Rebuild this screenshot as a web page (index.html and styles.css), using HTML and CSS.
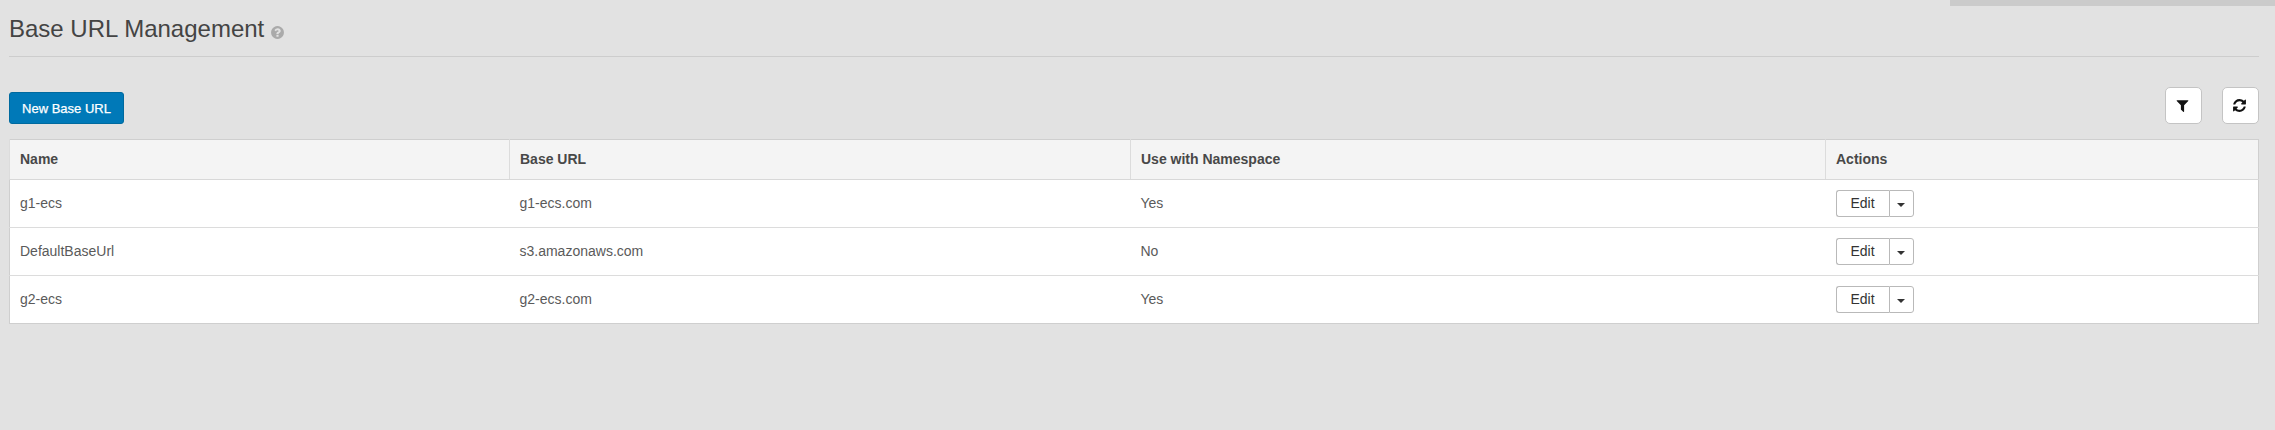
FILE: index.html
```html
<!DOCTYPE html>
<html lang="en">
<head>
<meta charset="utf-8">
<title>Base URL Management</title>
<link rel="stylesheet" href="styles.css">
</head>
<body>
<div class="top-strip"></div>
<main class="page">
  <header class="page-header">
    <h1 class="page-title">Base URL Management</h1>
    <svg class="help-icon" viewBox="0 0 1792 1792"><path d="M1024 1376v-192q0-14-9-23t-23-9h-192q-14 0-23 9t-9 23v192q0 14 9 23t23 9h192q14 0 23-9t9-23zm256-672q0-88-55.5-163t-138.5-116-170-41q-243 0-371 213-15 24 8 42l132 100q7 6 19 6 16 0 25-12 53-68 86-92 34-24 86-24 48 0 85.5 26t37.5 59q0 38-20 61t-68 45q-63 28-115.5 86.5t-52.5 125.5v36q0 14 9 23t23 9h192q14 0 23-9t9-23q0-19 21.5-49.5t54.5-49.5q32-18 49-28.5t46-35 44.5-48 28-60.5 12.5-81zm384 192q0 209-103 385.5t-279.5 279.5-385.5 103-385.5-103-279.5-279.5-103-385.5 103-385.5 279.5-279.5 385.5-103 385.5 103 279.5 279.5 103 385.5z"/></svg>
  </header>
  <div class="toolbar">
    <button class="btn-primary" type="button">New Base URL</button>
    <div class="tools">
      <button class="btn-icon" type="button" aria-label="Filter"><svg viewBox="0 0 1792 1792"><path d="M1595 295q17 41-14 70l-493 493v742q0 42-39 59-13 5-25 5-27 0-45-19l-256-256q-19-19-19-45v-486l-493-493q-31-29-14-70 17-39 59-39h1280q42 0 59 39z"/></svg></button>
      <button class="btn-icon" type="button" aria-label="Refresh"><svg viewBox="0 0 1792 1792"><path d="M1639 1056q0 5-1 7-64 268-268 434.5t-478 166.5q-146 0-282.5-55t-243.5-157l-129 129q-19 19-45 19t-45-19-19-45v-448q0-26 19-45t45-19h448q26 0 45 19t19 45-19 45l-137 137q71 66 161 102t187 36q134 0 250-65t186-179q11-17 53-117 8-23 30-23h192q13 0 22.5 9.5t9.5 22.5zm25-800v448q0 26-19 45t-45 19h-448q-26 0-45-19t-19-45 19-45l138-138q-148-137-349-137-134 0-250 65t-186 179q-11 17-53 117-8 23-30 23h-199q-13 0-22.5-9.5t-9.5-22.5v-7q65-268 270-434.5t480-166.5q146 0 284 55.5t245 156.5l130-129q19-19 45-19t45 19 19 45z"/></svg></button>
    </div>
  </div>
  <table class="grid">
    <colgroup><col class="col-name"><col class="col-url"><col class="col-ns"><col></colgroup>
    <thead>
      <tr><th>Name</th><th>Base URL</th><th>Use with Namespace</th><th>Actions</th></tr>
    </thead>
    <tbody>
      <tr><td>g1-ecs</td><td>g1-ecs.com</td><td>Yes</td><td><div class="split"><button class="split-main" type="button">Edit</button><button class="split-caret" type="button" aria-label="More"><span class="caret"></span></button></div></td></tr>
      <tr><td>DefaultBaseUrl</td><td>s3.amazonaws.com</td><td>No</td><td><div class="split"><button class="split-main" type="button">Edit</button><button class="split-caret" type="button" aria-label="More"><span class="caret"></span></button></div></td></tr>
      <tr><td>g2-ecs</td><td>g2-ecs.com</td><td>Yes</td><td><div class="split"><button class="split-main" type="button">Edit</button><button class="split-caret" type="button" aria-label="More"><span class="caret"></span></button></div></td></tr>
    </tbody>
  </table>
</main>
</body>
</html>
```
FILE: styles.css
```css
* { box-sizing: border-box; }
html, body { margin: 0; height: 100%; }
body {
  background: #e2e2e2;
  color: #555;
  font-family: "Liberation Sans", Arial, sans-serif;
  font-size: 14px;
  overflow: hidden;
}
.top-strip {
  width: 325px;
  height: 6px;
  margin-left: auto;
  background: #cbcbcb;
}
.page { padding: 0 16px 0 9px; }
.page-header {
  display: flex;
  align-items: center;
  height: 51px;
  border-bottom: 1px solid #cdcdcd;
  padding-bottom: 5px;
}
.page-title {
  margin: 0;
  font-size: 24px;
  font-weight: 400;
  line-height: 30px;
  color: #444;
}
.help-icon {
  width: 15px;
  height: 15px;
  margin: 7px 0 0 6px;
  fill: #aaa;
}
.toolbar {
  display: flex;
  justify-content: space-between;
  align-items: flex-end;
  margin-top: 30px;
  height: 37px;
}
.btn-primary {
  height: 32px;
  width: 115px;
  padding: 0;
  background: #0079b8;
  border: 1px solid #006a9f;
  border-radius: 3px;
  color: #fff;
  font: 400 13px "Liberation Sans", Arial, sans-serif;
  -webkit-text-stroke: 0.25px #fff;
}
.tools { display: flex; gap: 20px; }
.btn-icon {
  display: flex;
  align-items: center;
  justify-content: center;
  width: 37px;
  height: 37px;
  padding: 0 2px 0 0;
  background: #fff;
  border: 1px solid #c4c4c4;
  border-radius: 5px;
}
.btn-icon svg { width: 15px; height: 15px; fill: #111; }
.grid {
  width: 100%;
  margin-top: 15px;
  table-layout: fixed;
  border-collapse: collapse;
  background: #fff;
  border: 1px solid #cfcfcf;
}
.col-name { width: 500px; }
.col-url { width: 621px; }
.col-ns { width: 695px; }
.grid th {
  height: 40px;
  padding: 0 10px 1px;
  background: #f4f4f4;
  border-left: 1px solid #dcdcdc;
  border-bottom: 1px solid #d8d8d8;
  text-align: left;
  font-weight: 700;
  color: #484848;
}
.grid td {
  height: 48px;
  padding: 0 10px 2px;
  border-top: 1px solid #dcdcdc;
  color: #5a5a5a;
}
.split { display: flex; width: 78px; height: 27px; margin-top: 2px; }
.split-main, .split-caret {
  background: #fff;
  border: 1px solid #b9b9b9;
  padding: 0;
  color: #333;
  font: 14px "Liberation Sans", Arial, sans-serif;
}
.split-main { width: 53px; padding-bottom: 1px; border-radius: 3px 0 0 3px; border-right: 0; }
.split-caret {
  display: flex;
  align-items: center;
  justify-content: center;
  width: 25px;
  border-radius: 0 3px 3px 0;
}
.caret {
  width: 0;
  height: 0;
  margin-top: 2px;
  border-top: 4px solid #333;
  border-left: 4px solid transparent;
  border-right: 4px solid transparent;
}
```
